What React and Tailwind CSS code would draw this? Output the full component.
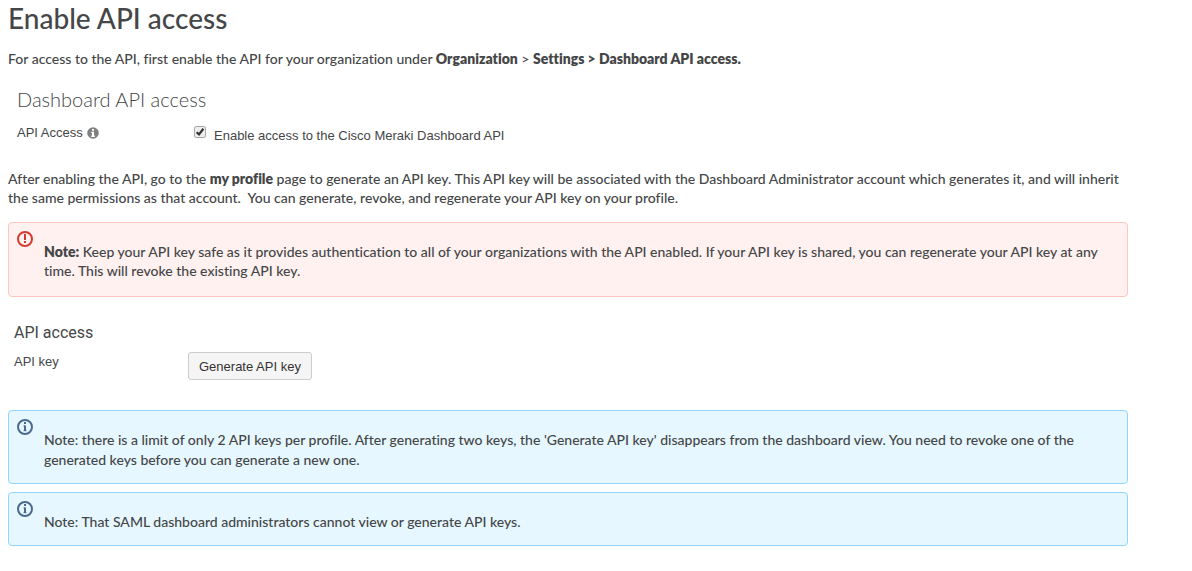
import { useState } from "react";

function ExclamationIcon() {
  return (
    <svg className="block size-4 shrink-0" viewBox="0 0 16 16" fill="none" stroke="#d43b2f" strokeWidth="2" aria-hidden="true">
      <circle cx="8" cy="8" r="7" />
      <path d="M8 3v6M8 10v2" />
    </svg>
  );
}

function InfoIcon() {
  return (
    <svg className="block size-4 shrink-0" viewBox="0 0 16 16" fill="none" stroke="#4a6a8f" aria-hidden="true">
      <circle cx="8" cy="8" r="7" strokeWidth="2" />
      <path d="M8 3v2M8 6.5V12" strokeWidth="2" />
      <path d="M6.5 7H8M6.5 11.7h3" strokeWidth="1" />
    </svg>
  );
}

function SolidInfoIcon() {
  return (
    <svg className="block size-3 shrink-0" viewBox="0 0 12 12" aria-hidden="true">
      <circle cx="6" cy="6" r="5.8" fill="#808080" />
      <path d="M5 2h2v1.7H5zM4.2 4.8H7V8.6h.9V10H4.2V8.6H5V6.1h-.8z" fill="#fff" />
    </svg>
  );
}

function Note({ tone, children }) {
  const danger = tone === "danger";
  return (
    <aside
      className={
        danger
          ? "flex gap-[11px] rounded-[4px] border border-[#fcc5c1] bg-[#fff1f0] px-2 pt-2 pb-4"
          : "flex gap-[11px] rounded-[4px] border border-[#91d5ff] bg-[#e6f7ff] px-2 pt-2 pb-[13px]"
      }
    >
      {danger ? <ExclamationIcon /> : <InfoIcon />}
      <p className="pt-[11px]">{children}</p>
    </aside>
  );
}

export default function App() {
  const [enabled, setEnabled] = useState(true);

  return (
    <main className="max-w-[1136px] px-2 pb-6 font-['Lato',sans-serif] text-sm leading-[19px] font-medium text-[#444647] [font-variant-ligatures:none]">
      <h1 className="pt-0.5 text-[28px] leading-8 font-medium">Enable API access</h1>
      <p className="mt-[15px]">
        For access to the API, first enable the API for your organization under{" "}
        <strong className="font-extrabold">Organization</strong> &gt;{" "}
        <strong className="font-extrabold">Settings &gt; Dashboard API access.</strong>
      </p>

      <section className="mt-[19px] px-[9px] font-['Liberation_Sans',sans-serif] text-[13px] font-normal">
        <h2 className="font-['Lato',sans-serif] text-xl leading-6 font-light">Dashboard API access</h2>
        <div className="mt-3 flex items-start">
          <div className="flex w-[177px] shrink-0 items-center gap-1">
            API Access <SolidInfoIcon />
          </div>
          <label htmlFor="api-enabled" className="flex items-start gap-2 pt-[3px]">
            <span className="grid">
              <input
                id="api-enabled"
                type="checkbox"
                checked={enabled}
                onChange={(e) => setEnabled(e.target.checked)}
                className="peer col-start-1 row-start-1 size-3 appearance-none rounded-[2px] border border-[#aaaaaa] bg-[#ededed]"
              />
              <svg className="pointer-events-none invisible col-start-1 row-start-1 size-3 peer-checked:visible" viewBox="0 0 12 12" fill="none" stroke="#333" strokeWidth="2.2" aria-hidden="true">
                <path d="M2.6 6.2 5 8.4 9.4 2.8" />
              </svg>
            </span>
            Enable access to the Cisco Meraki Dashboard API
          </label>
        </div>
      </section>

      <p className="mt-6">
        After enabling the API, go to the <strong className="font-extrabold">my profile</strong> page to generate an API
        key. This API key will be associated with the Dashboard Administrator account which generates it, and will
        inherit the same permissions as that account.&nbsp; You can generate, revoke, and regenerate your API key on
        your profile.
      </p>

      <div className="mt-[15px]">
        <Note tone="danger">
          <strong className="font-extrabold">Note:</strong> Keep your API key safe as it provides authentication to all
          of your organizations with the API enabled. If your API key is shared, you can regenerate your API key at any
          time. This will revoke the existing API key.
        </Note>
      </div>

      <section className="mt-6 px-1.5 font-['Liberation_Sans',sans-serif] text-[13px] font-normal">
        <h2 className="font-['Roboto',sans-serif] text-base leading-6">API access</h2>
        <div className="mt-[7px] flex items-start">
          <div className="w-[174px] shrink-0">API key</div>
          <button type="button" className="h-7 rounded-[3px] border border-[#cccccc] bg-[#f5f5f5] px-2.5 text-[#333333]">
            Generate API key
          </button>
        </div>
      </section>

      <div className="mt-[30px] flex flex-col gap-2 leading-5">
        <Note>
          Note: there is a limit of only 2 API keys per profile. After generating two keys, the 'Generate API key'
          disappears from the dashboard view. You need to revoke one of the generated keys before you can generate a
          new one.
        </Note>
        <Note>Note: That SAML dashboard administrators cannot view or generate API keys.</Note>
      </div>
    </main>
  );
}
